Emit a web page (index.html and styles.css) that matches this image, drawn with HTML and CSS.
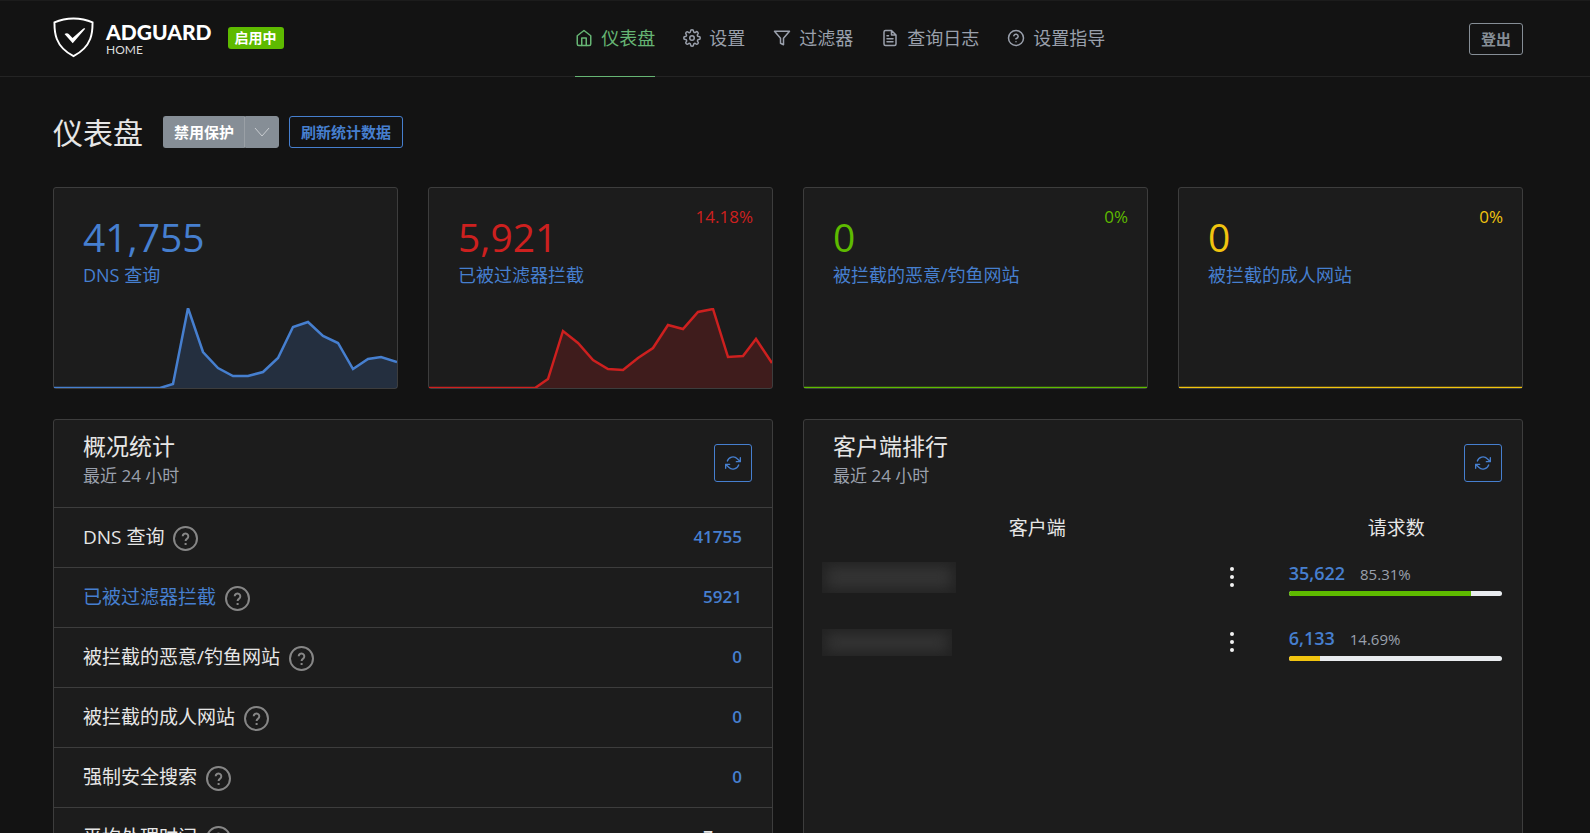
FILE: index.html
```html
<!DOCTYPE html>
<html lang="zh-CN">
<head>
<meta charset="utf-8">
<title>AdGuard Home</title>
<link rel="stylesheet" href="styles.css">
</head>
<body>
<svg class="sprite" aria-hidden="true">
  <symbol id="i-help" viewBox="0 0 24 24"><circle cx="12" cy="12" r="10"/><path d="M9.1 9a3 3 0 0 1 5.8 1c0 2-3 3-3 3M12 17h.01"/></symbol>
  <symbol id="i-refresh" viewBox="0 0 24 24"><path d="M23 4v6h-6M1 20v-6h6M3.5 9a9 9 0 0 1 14.9-3.4L23 10M1 14l4.6 4.4A9 9 0 0 0 20.500 15"/></symbol>
  <symbol id="i-question" viewBox="0 0 25 25"><circle cx="12.500" cy="12.500" r="11.500"/><path class="mark" d="M9.700 10.300a2.800 2.800 0 1 1 4.400 2.300c-1 .7-1.500 1.100-1.500 2.300M12.600 16.900v2"/></symbol>
</svg>

<header class="header">
  <div class="container header-row">
    <div class="brand">
      <svg class="shield" viewBox="0 0 42 42"><path d="M21 1.500C14.500 1.500 7.500 2.800 1.500 5.500c0 8-.6 24.500 19.500 34.500 20.100-10 19.500-26.500 19.500-34.500C34.500 2.800 27.500 1.500 21 1.500z" fill="none" stroke="#fff" stroke-width="2"/><path d="M20.200 26.800 33 12c-.9-.8-1.800-.3-2.500.3L20 21.400l-3.900-4c-1.200-1.300-3-.8-4.300 0z" fill="#fff"/></svg>
      <div class="wordmark"><strong>ADGUARD</strong><span>HOME</span></div>
      <span class="badge">启用中</span>
    </div>
    <nav class="nav">
      <a class="active" href="#"><svg viewBox="0 0 24 24"><path d="m3 9 9-7 9 7v11a2 2 0 0 1-2 2H5a2 2 0 0 1-2-2z"/><path d="M9 22V12h6v10"/></svg>仪表盘</a>
      <a href="#settings"><svg viewBox="0 0 24 24"><circle cx="12" cy="12" r="3"/><path d="M19.400 15a1.650 1.650 0 0 0 .33 1.820l.06.060a2 2 0 0 1-2.830 2.830l-.06-.06a1.650 1.650 0 0 0-2.800 1.170V21a2 2 0 0 1-4 0v-.09A1.650 1.650 0 0 0 7.200 19.700l-.06.060a2 2 0 0 1-2.830-2.830l.06-.06A1.650 1.650 0 0 0 3.200 14H3a2 2 0 0 1 0-4h.09A1.650 1.650 0 0 0 4.300 7.200l-.06-.06a2 2 0 0 1 2.830-2.830l.06.060A1.650 1.650 0 0 0 10 3.200V3a2 2 0 0 1 4 0v.09a1.650 1.650 0 0 0 2.800 1.200l.06-.06a2 2 0 0 1 2.830 2.830l-.06.060A1.650 1.650 0 0 0 20.800 10H21a2 2 0 0 1 0 4h-.09a1.650 1.650 0 0 0-1.510 1z"/></svg>设置</a>
      <a href="#filters"><svg viewBox="0 0 24 24"><path d="M22 3H2l8 9.460V19l4 2v-8.540z"/></svg>过滤器</a>
      <a href="#logs"><svg viewBox="0 0 24 24"><path d="M14 2H6a2 2 0 0 0-2 2v16a2 2 0 0 0 2 2h12a2 2 0 0 0 2-2V8zM14 2v6h6M16 13H8M16 17H8M10 9H8"/></svg>查询日志</a>
      <a href="#guide"><svg><use href="#i-help"/></svg>设置指导</a>
    </nav>
    <button class="btn btn-gray-outline">登出</button>
  </div>
</header>

<main class="container">
  <div class="page-head">
    <h1>仪表盘</h1>
    <div class="split">
      <button class="btn btn-gray">禁用保护</button>
      <button class="btn btn-gray toggle" aria-label="更多"><svg viewBox="0 0 16 10"><path d="m1 1 7 8 7-8"/></svg></button>
    </div>
    <button class="btn btn-blue-outline">刷新统计数据</button>
  </div>

  <section class="stats">
    <article class="card stat blue">
      <div class="value">41,755</div><a href="#logs">DNS 查询</a>
      <svg class="chart" viewBox="0 0 343 80" preserveAspectRatio="none"><path class="area" d="M0 80H106L119 76 134 0 149 44 164 60 179 68H194L209 64 224 50 239 19 254 14 269 28 284 35 299 61 314 51 327 49 343 54V80H0z"/><path class="line" d="M0 80H106L119 76 134 0 149 44 164 60 179 68H194L209 64 224 50 239 19 254 14 269 28 284 35 299 61 314 51 327 49 343 54"/></svg>
    </article>
    <article class="card stat red">
      <div class="value">5,921</div><a href="#logs">已被过滤器拦截</a><span class="percent">14.18%</span>
      <svg class="chart" viewBox="0 0 343 80" preserveAspectRatio="none"><path class="area" d="M0 80H106L119 71 134 23 149 35 164 52 179 61 194 62 209 50 224 40 239 17 254 21 269 4 284 1 299 49 314 48 327 31 343 55V80H0z"/><path class="line" d="M0 80H106L119 71 134 23 149 35 164 52 179 61 194 62 209 50 224 40 239 17 254 21 269 4 284 1 299 49 314 48 327 31 343 55"/></svg>
    </article>
    <article class="card stat green">
      <div class="value">0</div><a href="#logs">被拦截的恶意/钓鱼网站</a><span class="percent">0%</span>
      <svg class="chart" viewBox="0 0 343 80" preserveAspectRatio="none"><path class="line" d="M0 80H343"/></svg>
    </article>
    <article class="card stat yellow">
      <div class="value">0</div><a href="#logs">被拦截的成人网站</a><span class="percent">0%</span>
      <svg class="chart" viewBox="0 0 343 80" preserveAspectRatio="none"><path class="line" d="M0 80H343"/></svg>
    </article>
  </section>

  <section class="panels">
    <article class="card">
      <div class="card-head">
        <div><h2>概况统计</h2><p>最近 24 小时</p></div>
        <button class="refresh" aria-label="刷新"><svg><use href="#i-refresh"/></svg></button>
      </div>
      <table class="summary">
        <tr><th><div>DNS 查询<svg><use href="#i-question"/></svg></div></th><td><a href="#logs">41755</a></td></tr>
        <tr><th><div><a href="#logs">已被过滤器拦截</a><svg><use href="#i-question"/></svg></div></th><td><a href="#logs">5921</a></td></tr>
        <tr><th><div>被拦截的恶意/钓鱼网站<svg><use href="#i-question"/></svg></div></th><td><a href="#logs">0</a></td></tr>
        <tr><th><div>被拦截的成人网站<svg><use href="#i-question"/></svg></div></th><td><a href="#logs">0</a></td></tr>
        <tr><th><div>强制安全搜索<svg><use href="#i-question"/></svg></div></th><td><a href="#logs">0</a></td></tr>
        <tr><th><div>平均处理时间<svg><use href="#i-question"/></svg></div></th><td>7 ms</td></tr>
      </table>
    </article>

    <article class="card">
      <div class="card-head">
        <div><h2>客户端排行</h2><p>最近 24 小时</p></div>
        <button class="refresh" aria-label="刷新"><svg><use href="#i-refresh"/></svg></button>
      </div>
      <table class="clients">
        <thead><tr><th class="client-col">客户端</th><th>请求数</th></tr></thead>
        <tbody>
          <tr>
            <td><div class="client"><span class="masked"></span><button class="dots" aria-label="选项"><svg viewBox="0 0 4 20"><circle cx="2" cy="2" r="2"/><circle cx="2" cy="10" r="2"/><circle cx="2" cy="18" r="2"/></svg></button></div></td>
            <td><div class="count"><a href="#logs">35,622</a><span>85.31%</span></div><div class="bar"><div class="fill-green" style="width:85.31%"></div></div></td>
          </tr>
          <tr>
            <td><div class="client"><span class="masked short"></span><button class="dots" aria-label="选项"><svg viewBox="0 0 4 20"><circle cx="2" cy="2" r="2"/><circle cx="2" cy="10" r="2"/><circle cx="2" cy="18" r="2"/></svg></button></div></td>
            <td><div class="count"><a href="#logs">6,133</a><span>14.69%</span></div><div class="bar"><div class="fill-yellow" style="width:14.69%"></div></div></td>
          </tr>
        </tbody>
      </table>
    </article>
  </section>
</main>
</body>
</html>
```
FILE: styles.css
```css
* { box-sizing: border-box; }

html { height: 100%; overflow: hidden; background: #131313; }

body {
  margin: 0;
  height: 100%;
  overflow: hidden;
  padding-right: 14px;
  color: #e6e6e6;
  font: 15px/24px "Open Sans", "Noto Sans CJK SC", sans-serif;
}

a { color: #467fcf; text-decoration: none; }
h1, h2, p { margin: 0; font-weight: 400; }
button { font: inherit; cursor: pointer; }
svg { display: block; }
.sprite { position: absolute; width: 0; height: 0; }

.container { max-width: 1500px; margin: 0 auto; padding: 0 15px; }

.header { margin-right: -14px; padding-right: 14px; border-top: 1px solid #1c1c1c; border-bottom: 1px solid #242424; }
.header-row { display: grid; grid-template-columns: 5fr auto 4fr; align-items: center; height: 75px; }
.header-row > .btn { justify-self: end; }

.brand { display: flex; align-items: center; padding-bottom: 2px; }
.shield { width: 41px; height: 41px; }
.wordmark { display: flex; flex-direction: column; margin: 5px 0 0 12px; color: #fff; font-family: Lato, sans-serif; }
.wordmark strong { font-size: 21px; line-height: 20px; font-weight: 900; }
.wordmark span { font-size: 12px; line-height: 16px; color: #ddd; }
.badge { margin-left: 16px; padding: 0 7px; border-radius: 3px; background: #5eba00; color: #fff; font-size: 14px; line-height: 22px; font-weight: 700; }

.nav { display: flex; gap: 28px; height: 76px; margin-bottom: -1px; }
.nav a { display: flex; align-items: center; gap: 8px; padding-bottom: 1px; color: #9aa0ac; font-size: 18px; border-bottom: 1px solid transparent; }
.nav a.active { color: #66b574; border-color: #66b574; }
.nav svg { width: 18px; height: 18px; overflow: visible; fill: none; stroke: currentColor; stroke-width: 2; stroke-linecap: round; stroke-linejoin: round; }

.btn { height: 32px; padding: 0 11px; border: 1px solid; border-radius: 3px; background: none; font-size: 15px; font-weight: 600; line-height: 24px; }
.btn-gray { padding: 0 10px; background: #868e96; border-color: #868e96; color: #fff; }
.btn-gray-outline { color: #868e96; }
.btn-blue-outline { color: #467fcf; }
.split { display: flex; margin: 0 10px 0 20px; }
.split .btn:first-child { border-radius: 3px 0 0 3px; border-right-color: #9aa0a6; }
.split .toggle { padding: 0 8px; border-radius: 0 3px 3px 0; }
.toggle svg { width: 16px; height: 10px; fill: none; stroke: #c8ccd0; }

.page-head { display: flex; align-items: center; height: 32px; margin: 39px 0; }
h1 { padding-top: 2px; font-size: 30px; line-height: 36px; }

.card { border: 1px solid #3d3d3d; border-radius: 3px; background: #1c1c1c; }
.stats { display: grid; grid-template-columns: repeat(4, 1fr); gap: 30px; }
.stat { position: relative; height: 202px; padding: 25px 29px; }
.value { font-size: 39px; line-height: 48px; }
.stat a { display: block; font-size: 18px; line-height: 28px; }
.percent { position: absolute; top: 17px; right: 19px; font-size: 17px; }
.chart { position: absolute; left: 0; bottom: 0; width: 100%; height: 80px; }
.line { fill: none; stroke: currentColor; stroke-width: 2.5; }
.area { fill: currentColor; opacity: .2; }
.blue { color: #467fcf; }
.red { color: #cd201f; }
.green { color: #5eba00; }
.yellow { color: #f1c40f; }

.panels { display: grid; grid-template-columns: repeat(2, 1fr); gap: 30px; margin-top: 30px; }
.card-head { display: flex; justify-content: space-between; height: 87px; padding: 10px 20px 0 29px; }
h2 { font-size: 23px; line-height: 32px; }
.card-head p { color: #9aa0ac; font-size: 17px; line-height: 28px; }
.refresh { display: grid; place-items: center; width: 38px; height: 38px; margin-top: 14px; padding: 0; border: 1px solid #467fcf; border-radius: 3px; background: none; color: #467fcf; }
.refresh svg { width: 16px; height: 16px; fill: none; stroke: currentColor; stroke-width: 2; stroke-linecap: round; stroke-linejoin: round; }

table { width: 100%; border-collapse: collapse; }
th { font-weight: 400; }
.summary th, .summary td { height: 60px; padding: 0 30px 2px 29px; border-top: 1px solid #3d3d3d; }
.summary th { text-align: left; font-size: 19px; }
.summary th div { display: flex; align-items: center; gap: 9px; }
.summary td { text-align: right; font-size: 17px; font-weight: 600; }
.summary svg { width: 25px; height: 25px; margin-top: 4px; fill: none; stroke: #868686; stroke-width: 2; }

.clients { table-layout: fixed; }
.clients th { height: 41px; padding: 0; font-size: 19px; }
.client-col { width: 65%; }
.clients td { height: 65px; padding: 0 20px 7px 18px; vertical-align: middle; }
.client { display: flex; justify-content: space-between; align-items: center; padding-right: 17px; }
.masked { width: 134px; height: 31px; background: #343434; box-shadow: inset 0 0 14px 4px #212121; }
.masked.short { width: 130px; height: 27px; }
.dots { padding: 0; border: 0; background: none; }
.dots svg { width: 4px; height: 20px; fill: #f2f2f2; }
.count { display: flex; align-items: baseline; gap: 15px; }
.count a { font-size: 18px; line-height: 28px; font-weight: 600; }
.count span { color: #9aa0ac; font-size: 15px; }
.bar { height: 5px; margin-top: 4px; border-radius: 3px; overflow: hidden; background: #e9ecef; }
.bar div { height: 5px; }
.fill-green { background: #5eba00; }
.fill-yellow { background: #f1c40f; }
```
